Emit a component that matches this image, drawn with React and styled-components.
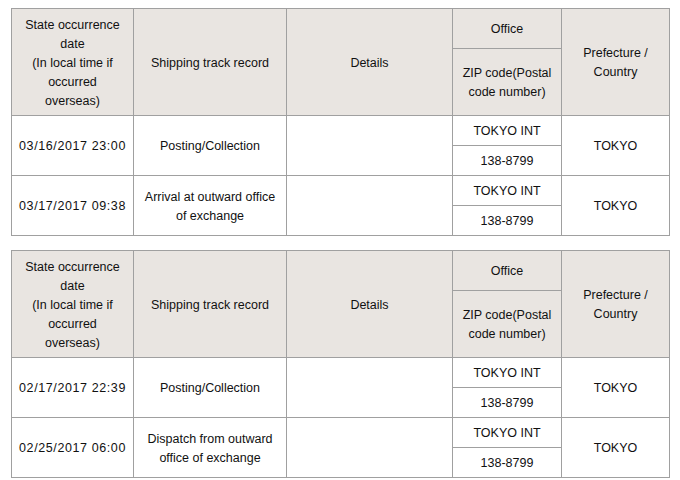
import React from 'react'
import styled, { createGlobalStyle } from 'styled-components'

const GlobalStyle = createGlobalStyle`
	body {
		margin: 0;
		background: #fff;
		font-family: "Liberation Sans", Arial, sans-serif;
		color: #111;
	}
`

const Page = styled.div`
	display: flex;
	flex-direction: column;
	gap: 14px;
	padding: 8px 11px;
`

const Table = styled.table`
	width: 659px;
	table-layout: fixed;
	border-collapse: separate;
	border-spacing: 0;
	border-top: 1px solid #a0a0a0;
	border-left: 1px solid #a0a0a0;
	font-size: 12.5px;
	line-height: 19px;
`

const Row = styled.tr`
	height: ${(p) => p.$h}px;
`

const Cell = styled.td`
	box-sizing: border-box;
	padding: 2px 6px 0;
	border-right: 1px solid #a0a0a0;
	border-bottom: 1px solid #a0a0a0;
	text-align: center;
	vertical-align: middle;
	font-weight: normal;
	background: ${(p) => (p.$head ? '#e9e5e1' : '#fff')};
	width: ${(p) => (p.$w ? `${p.$w}px` : 'auto')};
	letter-spacing: ${(p) => (p.$wide ? '0.6px' : 'normal')};
	white-space: ${(p) => (p.$wide ? 'nowrap' : 'normal')};
`

const tables = [
	[
		{ date: '03/16/2017 23:00', record: 'Posting/Collection' },
		{ date: '03/17/2017 09:38', record: 'Arrival at outward office of exchange' },
	],
	[
		{ date: '02/17/2017 22:39', record: 'Posting/Collection' },
		{ date: '02/25/2017 06:00', record: 'Dispatch from outward office of exchange' },
	],
]

const TrackTable = ({ events }) => (
	<Table>
		<thead>
			<Row $h={40}>
				<Cell as="th" $head $w={122} rowSpan={2}>
					State occurrence<br />date<br />(In local time if<br />occurred<br />overseas)
				</Cell>
				<Cell as="th" $head $w={153} rowSpan={2}>Shipping track record</Cell>
				<Cell as="th" $head $w={166} rowSpan={2}>Details</Cell>
				<Cell as="th" $head $w={109}>Office</Cell>
				<Cell as="th" $head $w={108} rowSpan={2}>Prefecture /<br />Country</Cell>
			</Row>
			<Row $h={67}>
				<Cell as="th" $head>ZIP code(Postal<br />code number)</Cell>
			</Row>
		</thead>
		<tbody>
			{events.map((ev) => (
				<React.Fragment key={ev.date}>
					<Row $h={30}>
						<Cell $wide rowSpan={2}>{ev.date}</Cell>
						<Cell rowSpan={2}>{ev.record}</Cell>
						<Cell rowSpan={2}></Cell>
						<Cell>TOKYO INT</Cell>
						<Cell rowSpan={2}>TOKYO</Cell>
					</Row>
					<Row $h={30}>
						<Cell>138-8799</Cell>
					</Row>
				</React.Fragment>
			))}
		</tbody>
	</Table>
)

const App = () => {
	return (
		<Page>
			<GlobalStyle />
			{tables.map((events, i) => (
				<TrackTable key={i} events={events} />
			))}
		</Page>
	)
}

export default App
